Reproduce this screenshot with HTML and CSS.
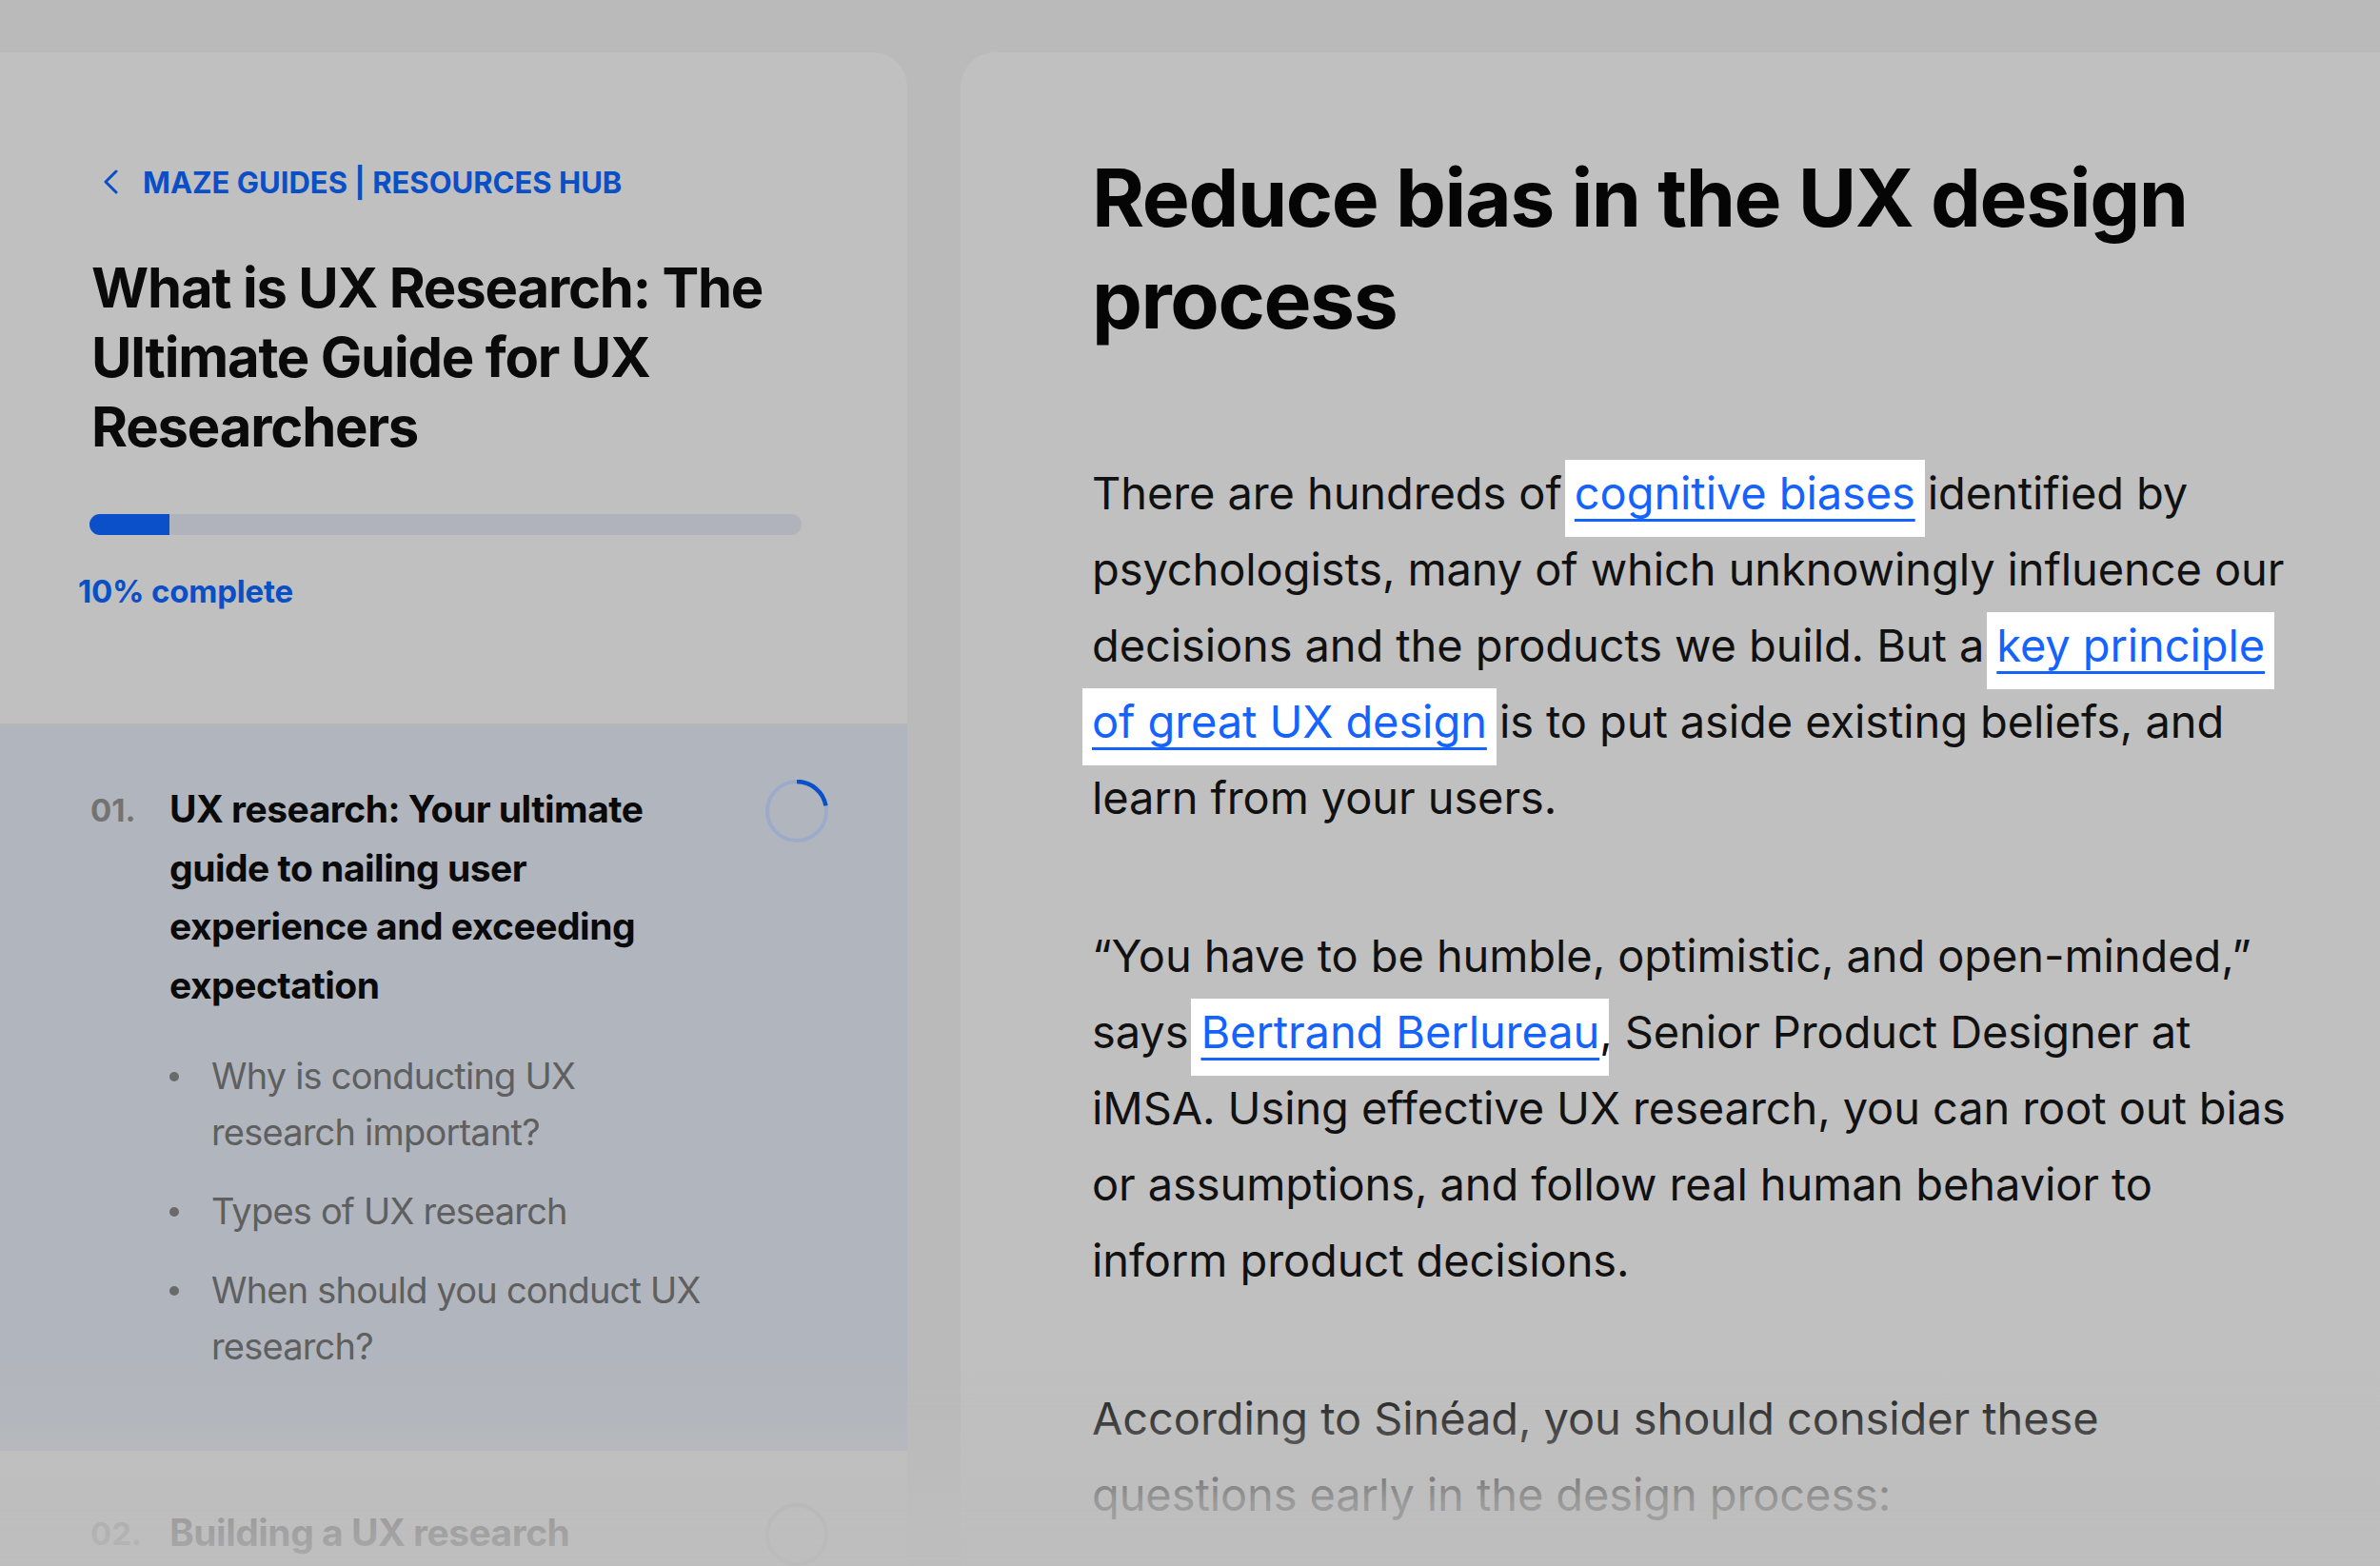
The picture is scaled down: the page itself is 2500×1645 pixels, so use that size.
FILE: index.html
```html
<!DOCTYPE html>
<html lang="en">
<head>
<meta charset="utf-8">
<title>What is UX Research</title>
<link rel="stylesheet" href="styles.css">
</head>
<body>
<div class="page">
  <aside class="sidebar">
    <div class="sidebar-head">
      <a class="crumb" href="#">
        <svg class="chev" width="16" height="26" viewBox="0 0 16 26"><path d="M14 2 L3 13 L14 24" fill="none" stroke="#0b4fc6" stroke-width="3" stroke-linecap="round" stroke-linejoin="round"/></svg>
        <span>MAZE GUIDES | RESOURCES HUB</span>
      </a>
      <h1 class="guide-title">What is UX Research: The<br>Ultimate Guide for UX<br>Researchers</h1>
      <div class="progress"><div class="progress-fill" style="width:11.2%"></div></div>
      <p class="progress-label">10% complete</p>
    </div>
    <nav class="toc">
      <div class="toc-item active">
        <div class="toc-row">
          <span class="toc-num">01.</span>
          <span class="toc-title">UX research: Your ultimate<br>guide to nailing user<br>experience and exceeding<br>expectation</span>
          <svg class="ring" width="66" height="66" viewBox="0 0 66 66"><circle cx="33" cy="33" r="31" fill="none" stroke="#9dabcb" stroke-width="4"/><circle cx="33" cy="33" r="31" fill="none" stroke="#0b50c8" stroke-width="4.5" stroke-dasharray="43 200" transform="rotate(-90 33 33)"/></svg>
        </div>
        <ul class="toc-sub">
          <li>Why is conducting UX<br>research important?</li>
          <li>Types of UX research</li>
          <li>When should you conduct UX<br>research?</li>
        </ul>
      </div>
      <div class="toc-item">
        <div class="toc-row">
          <span class="toc-num">02.</span>
          <span class="toc-title">Building a UX research</span>
          <svg class="ring" width="66" height="66" viewBox="0 0 66 66"><circle cx="33" cy="33" r="31" fill="none" stroke="#a9a9a9" stroke-width="4"/></svg>
        </div>
      </div>
    </nav>
  </aside>
  <main class="article">
    <h2 class="article-title">Reduce bias in the UX design<br>process</h2>
    <p>There are hundreds of <a class="link" href="#">cognitive biases</a> identified by<br>psychologists, many of which unknowingly influence our<br>decisions and the products we build. But a <a class="link" href="#">key principle<br>of great UX design</a> is to put aside existing beliefs, and<br>learn from your users.</p>
    <p>“You have to be humble, optimistic, and open-minded,”<br>says <a class="link" href="#">Bertrand Berlureau</a>, Senior Product Designer at<br>iMSA. Using effective UX research, you can root out bias<br>or assumptions, and follow real human behavior to<br>inform product decisions.</p>
    <p>According to Sinéad, you should consider these<br>questions early in the design process:</p>
  </main>
  <div class="fade"></div>
</div>
</body>
</html>
```
FILE: styles.css
```css
html, body {
  margin: 0;
  padding: 0;
}
body {
  background: #bababa;
  font-family: Inter, "Noto Sans", sans-serif;
  width: 2500px;
  height: 1645px;
  overflow: hidden;
  color: #0a0a0a;
}
.page {
  display: flex;
  gap: 56px;
  padding-top: 55px;
  height: 1645px;
  box-sizing: border-box;
}
.sidebar {
  width: 953px;
  flex: none;
  background: #c0c0c0;
  border-top-right-radius: 36px;
  display: flex;
  flex-direction: column;
  overflow: hidden;
}
.sidebar-head {
  flex: none;
  height: 707px;
  box-sizing: border-box;
  padding: 116px 0 0 96px;
  border-bottom: 2px solid #b6b6b6;
}
.crumb {
  display: flex;
  align-items: center;
  gap: 26px;
  margin-left: 12px;
  height: 40px;
  color: #0b4fc6;
  font-weight: 700;
  font-size: 31px;
  letter-spacing: 0;
  text-decoration: none;
  white-space: nowrap;
}
.chev { flex: none; }
.guide-title {
  margin: 55px 0 0;
  font-size: 58px;
  line-height: 73px;
  font-weight: 700;
  letter-spacing: -1.2px;
  white-space: nowrap;
}
.progress {
  margin: 55px 0 0 -2px;
  width: 748px;
  height: 22px;
  border-radius: 11px;
  background: #b0b3bb;
  overflow: hidden;
}
.progress-fill {
  height: 100%;
  background: #0b50c8;
}
.progress-label {
  margin: 39px 0 0 -14px;
  font-size: 33px;
  line-height: 40px;
  font-weight: 700;
  color: #0b4fc6;
  letter-spacing: -0.2px;
}
.toc {
  flex: 1;
  display: flex;
  flex-direction: column;
}
.toc-item {
  flex: none;
  padding: 55px 83px 0 95px;
}
.toc-item.active {
  background: #b1b5bd;
  padding: 57px 83px 80px 95px;
}
.toc-row {
  display: flex;
  align-items: flex-start;
}
.toc-num {
  width: 83px;
  flex: none;
  padding-top: 2px;
  font-size: 33px;
  line-height: 61.5px;
  font-weight: 700;
  color: #737373;
}
.toc-title {
  flex: 1;
  font-size: 39px;
  line-height: 61.5px;
  font-weight: 700;
  letter-spacing: -0.5px;
  white-space: nowrap;
}
.ring { flex: none; }
.toc-sub {
  list-style: none;
  margin: 36px 0 0 83px;
  padding: 0;
}
.toc-sub li {
  position: relative;
  padding-left: 44px;
  font-size: 38px;
  line-height: 59px;
  color: #5f5f5f;
  font-weight: 400;
  letter-spacing: -0.8px;
  white-space: nowrap;
}
.toc-sub li + li {
  margin-top: 24px;
}
.toc-sub li::before {
  content: "";
  position: absolute;
  left: 0;
  top: 25px;
  width: 10px;
  height: 10px;
  border-radius: 50%;
  background: #6a6a6a;
}
.article {
  flex: 1;
  background: #c0c0c0;
  border-top-left-radius: 36px;
  padding: 99px 0 0 138px;
}
.article-title {
  margin: 0;
  font-size: 84px;
  line-height: 107px;
  font-weight: 700;
  letter-spacing: -1.4px;
  color: #050505;
  white-space: nowrap;
}
.article p {
  margin: 86px 0 0;
  font-size: 47px;
  line-height: 80px;
  color: #111;
  white-space: nowrap;
  letter-spacing: -0.1px;
}
.article .article-title + p {
  margin-top: 110px;
}
.link {
  color: #1463ff;
  background: #fff;
  padding: 6px 10px 18px;
  margin: 0 -10px;
  text-decoration: underline;
  text-decoration-thickness: 3px;
  text-underline-offset: 10px;
  -webkit-box-decoration-break: clone;
  box-decoration-break: clone;
}
.fade {
  position: fixed;
  left: 0;
  right: 0;
  bottom: 0;
  height: 220px;
  pointer-events: none;
  background: linear-gradient(to bottom,
    rgba(189, 189, 189, 0) 0%,
    rgba(189, 189, 189, 0.25) 30%,
    rgba(189, 189, 189, 0.8) 70%,
    rgba(189, 189, 189, 0.9) 100%);
}
```
